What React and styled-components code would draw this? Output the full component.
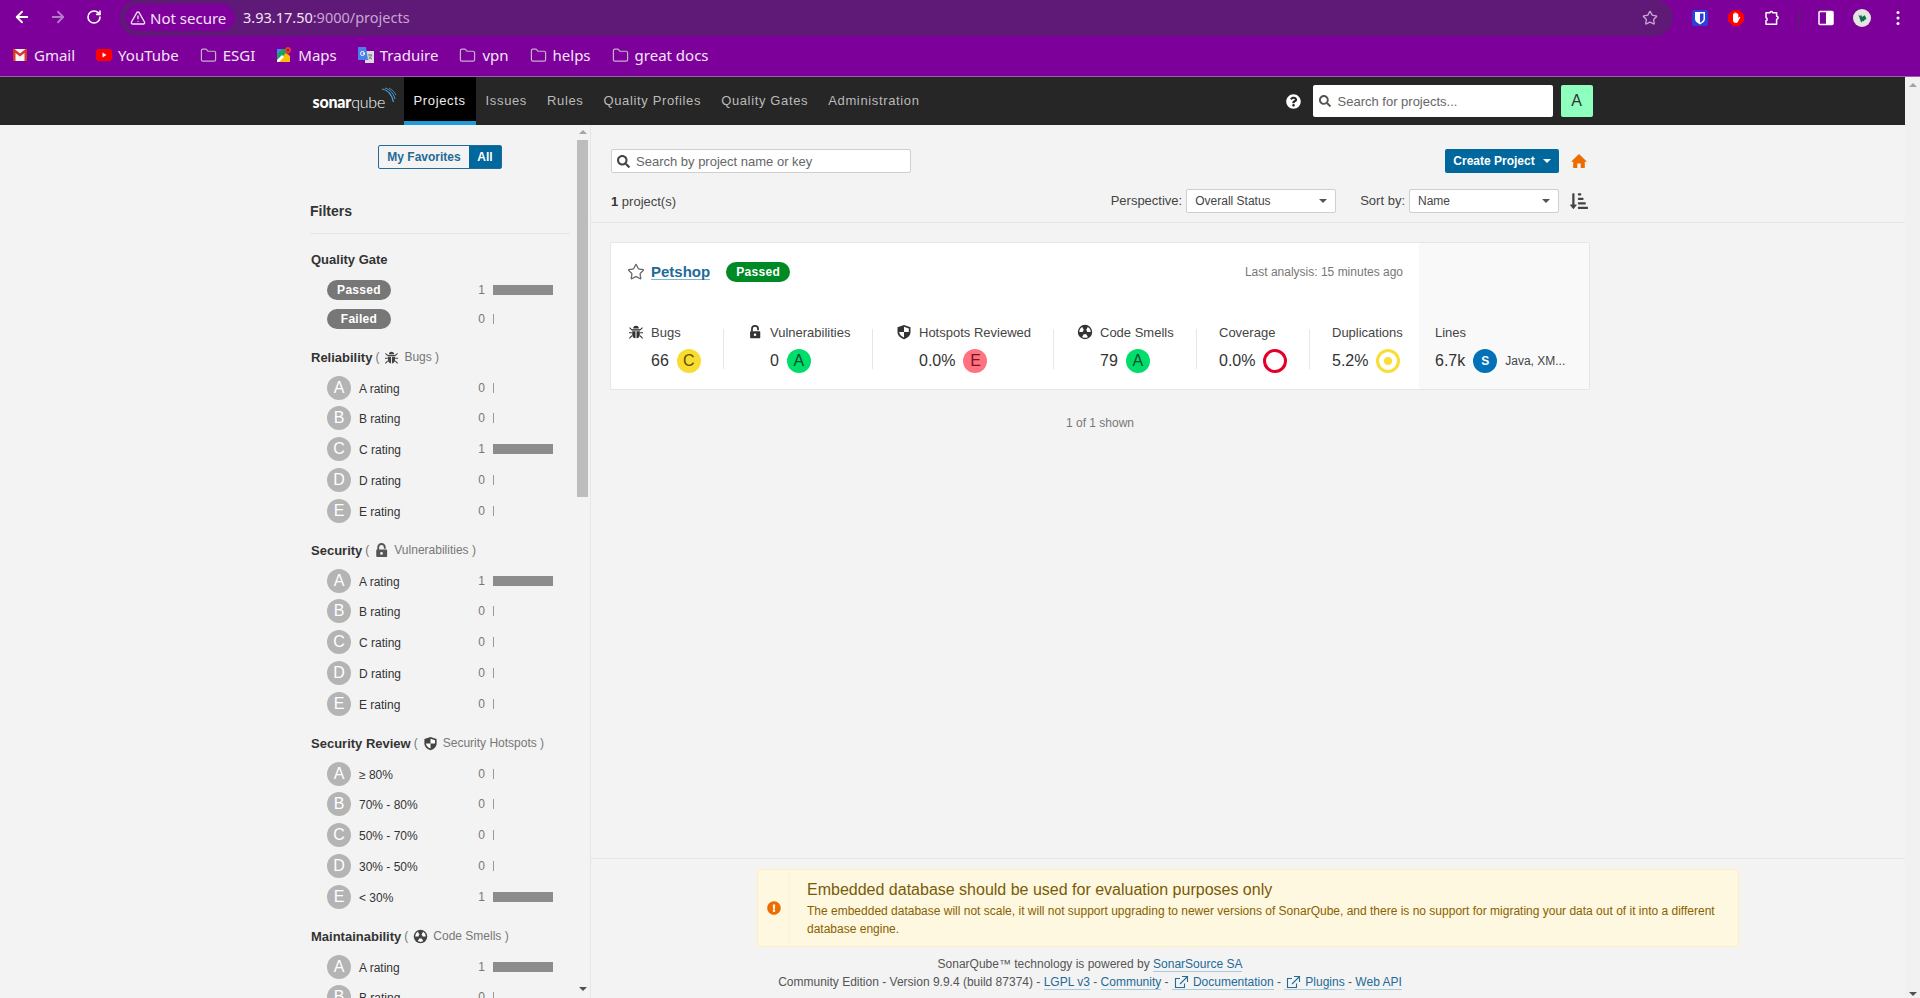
import React from 'react';
import styled, { createGlobalStyle } from 'styled-components';
import { ArrowLeft, ArrowRight, RotateCw, TriangleAlert, Star, Folder } from 'lucide-react';
import { FaQuestionCircle, FaExclamationCircle, FaSortAmountDownAlt, FaSearch } from 'react-icons/fa';

const Global = createGlobalStyle`
  html, body { margin: 0; padding: 0; height: 998px; overflow: hidden; background: #f3f3f3; }
  body { font-family: "Liberation Sans", Arial, sans-serif; font-size: 12px; color: #333; }
  * { box-sizing: border-box; }
`;

const Shell = styled.div`display: flex; flex-direction: column; width: 1920px; height: 998px;`;

/* Browser chrome */
const BrowserBar = styled.div`
  height: 77px; background: #7e009b; border-bottom: 1px solid #a05cb4; flex: none;
  font-family: "Noto Sans", sans-serif; color: #f3e6f7;
`;
const TabRow = styled.div`display: flex; align-items: flex-start; height: 36px;`;
const NavButtons = styled.div`display: flex; width: 120px; padding: 8px 0 0 13px; gap: 18px; color: #fff;`;
const IconSlot = styled.span`
  width: 18px; height: 18px; display: flex; align-items: center; justify-content: center;
  color: ${p => p.$dim ? '#b37cc6' : '#fff'};
`;
const AddressBar = styled.div`
  width: 1553px; height: 36px; border-radius: 18px; background: #5f1a78; display: flex; align-items: center;
  padding: 0 0 1px 5px; position: relative;
`;
const SecureChip = styled.div`
  width: 110px; height: 27px; border-radius: 14px; background: #7e009b; display: flex; align-items: center;
  gap: 4px; padding-left: 5px; font-size: 15px; color: #f3e6f7; white-space: nowrap;
`;
const Url = styled.div`margin-left: 8px; margin-bottom: 2px; font-size: 14.5px; color: #c8a6d2; white-space: nowrap; b { font-weight: 400; color: #f3e6f7; }`;
const AddressStar = styled.span`margin-left: auto; margin-right: 15px; display: flex; color: #c8a6d2;`;
const Extensions = styled.div`flex: 1; position: relative; display: flex; align-items: center; height: 36px;`;
const ExtSlot = styled.span`display: flex; align-items: center; justify-content: center; width: 18px; height: 20px; margin-left: ${p => p.$ml}px;`;
const ExtSep = styled.span`width: 2px; height: 20px; background: #5f1a78; margin-left: ${p => p.$ml}px;`;
const BookmarkRow = styled.div`display: flex; align-items: center; height: 40px; padding-left: 12px; padding-bottom: 2px;`;
const Bookmark = styled.div`display: flex; align-items: center; gap: 6px; margin-right: 21px; font-size: 15px; white-space: nowrap;`;
const FavBox = styled.span`display: flex; width: ${p => p.$w || 16}px; height: 16px; align-items: center; justify-content: center; color: #c4b0cd;`;

/* Layout */
const Body = styled.div`display: flex; flex: 1; min-height: 0;`;
const Content = styled.div`flex: 1; min-width: 0; display: flex; flex-direction: column;`;
const PageScroll = styled.div`width: 15px; background: #f1f1f1; display: flex; flex-direction: column; align-items: center; justify-content: space-between; padding: 6px 0 2px;`;
const ArrowUp = styled.span`width: 0; height: 0; border-left: 4px solid transparent; border-right: 4px solid transparent; border-bottom: 4px solid #a3a3a3;`;
const ArrowDown = styled.span`width: 0; height: 0; border-left: 4px solid transparent; border-right: 4px solid transparent; border-top: 4px solid #505050;`;

/* Sonar nav */
const TopNav = styled.div`height: 48px; background: #262626; flex: none;`;
const TopNavInner = styled.div`width: 1280px; height: 48px; margin: 0 auto; display: flex; align-items: stretch;`;
const LogoLink = styled.div`
  width: 91px; display: flex; align-items: center; position: relative; color: #fff; font-family: Lato, sans-serif;
  font-size: 16px; letter-spacing: -0.2px; padding-top: 1px;
  b { font-weight: 900; } span { font-weight: 300; }
`;
const LogoWaves = styled.svg`position: absolute; left: 68px; top: 10px;`;
const NavItem = styled.div`
  display: flex; align-items: center; padding: 4px 10px 2px; font-size: 13px; letter-spacing: 0.64px;
  color: ${p => p.$active ? '#eee' : '#bbb'};
  background: ${p => p.$active ? '#000' : 'transparent'};
  border-bottom: 4px solid ${p => p.$active ? '#1f9bd9' : 'transparent'};
`;
const NavRight = styled.div`margin-left: auto; display: flex; align-items: center; gap: 8px;`;
const HelpIcon = styled.span`display: flex; color: #fff; margin-right: 4px;`;
const GlobalSearch = styled.div`
  width: 240px; height: 32px; background: #fff; border-radius: 2px; display: flex; align-items: center;
  padding-left: 6px; gap: 7px; font-size: 13px; color: #666;
`;
const UserAvatar = styled.div`width: 32px; height: 32px; background: #8effbe; border-radius: 2px; display: flex; align-items: center; justify-content: center; font-size: 16px; color: #333;`;

const Columns = styled.div`display: flex; flex: 1; min-height: 0;`;

/* Sidebar */
const Sidebar = styled.aside`width: 591px; flex: none; display: flex; border-right: 1px solid #e6e6e6; overflow: hidden;`;
const SideInner = styled.div`width: 577px; flex: none; padding: 20px 7px 0 310px; overflow: hidden;`;
const SideScroll = styled.div`width: 11px; flex: none; display: flex; flex-direction: column; align-items: center; padding-top: 5px;`;
const SideThumb = styled.div`width: 11px; height: 357px; margin-top: 6px; margin-bottom: auto; background: #bdbdbd;`;
const SideArrows = styled.div`height: 9px; padding-top: 2px;`;
const Toggle = styled.div`display: flex; width: 124px; height: 24px; margin: 0 auto 32px; border: 1px solid #236a97; border-radius: 2px; font-weight: 700; font-size: 12px;`;
const ToggleOption = styled.div`
  flex: ${p => p.$on ? '0 0 32px' : '1'}; display: flex; align-items: center; justify-content: center;
  color: ${p => p.$on ? '#fff' : '#236a97'}; background: ${p => p.$on ? '#00689d' : 'transparent'};
`;
const FiltersTitle = styled.h2`margin: 0 0 15px; font-size: 14px; line-height: 20px; padding-bottom: 12px; border-bottom: 1px solid #e6e6e6; font-weight: 700; color: #333;`;
const Section = styled.section`margin-bottom: ${p => p.$mb ?? 11}px;`;
const SectionHead = styled.div`
  height: 20px; display: flex; align-items: center; padding: 0 0 ${p => p.$pb ?? 2}px 1px; margin-bottom: ${p => p.$mb ?? 8}px;
  font-weight: 700; font-size: 13px; color: #333; white-space: nowrap;
`;
const SectionSub = styled.span`display: inline-flex; align-items: center; gap: 5px; margin-left: 3px; font-size: 12px; font-weight: 400; color: #777;`;
const SubIcon = styled.span`display: inline-flex; color: #444;`;
const RowCount = styled.span`line-height: 24px; color: #777; font-size: 12px; width: 10px; text-align: right;`;
const BarBox = styled.span`width: 60px; height: 24px; margin-left: 8px; display: flex; align-items: center;`;
const PillRow = styled.div`
  display: flex; height: 29px; padding: 4px 17px 0; align-items: flex-start;
  ${RowCount} { line-height: 20px; }
  ${BarBox} { height: 20px; }
`;
const Pill = styled.span`
  width: 64px; height: 20px; border-radius: 10px; background: #777; color: #fff; font-weight: 700; font-size: 12px;
  letter-spacing: 0.3px; display: flex; align-items: center; justify-content: center;
`;
const RatingRow = styled.div`display: flex; height: 31px; padding: 0 17px; align-items: flex-start; ${SectionHead} + & { height: 30px; }`;
const FilterRating = styled.span`width: 24px; height: 24px; border-radius: 50%; background: #b4b4b4; color: #fff; font-size: 16px; display: flex; align-items: center; justify-content: center; flex: none;`;
const RowLabel = styled.span`margin-left: 8px; line-height: 26px; color: #333; font-size: 12px; white-space: nowrap;`;
const RowSpacer = styled.span`flex: 1;`;
const Bar = styled.span`display: block; height: 10px; width: ${p => p.$full ? 60 : 1}px; background: ${p => p.$full ? '#8c8c8c' : '#999'};`;

/* Main */
const Main = styled.main`flex: 1; min-width: 0; display: flex; flex-direction: column;`;
const PageHeader = styled.div`padding: 24px 0 9px 20px; border-bottom: 1px solid #e6e6e6;`;
const HeaderInner = styled.div`width: 978px; display: flex; flex-direction: column; gap: 16px;`;
const HeaderRow = styled.div`display: flex; align-items: center; height: 24px;`;
const ProjectSearch = styled.div`
  width: 300px; height: 24px; background: #fff; border: 1px solid #cfcfcf; border-radius: 2px; display: flex; align-items: center;
  padding-left: 5px; gap: 6px; color: #666; font-size: 13px; svg { color: #444; }
`;
const CreateButton = styled.div`
  margin-left: auto; width: 114px; height: 24px; background: #00689d; border-radius: 2px; color: #fff; font-weight: 700; font-size: 12px;
  display: flex; align-items: center; justify-content: center; gap: 8px;
`;
const Caret = styled.span`width: 0; height: 0; border-left: 4px solid transparent; border-right: 4px solid transparent; border-top: 4px solid ${p => p.$c || '#555'};`;
const HeaderIconBox = styled.span`width: 20px; margin-left: 10px; display: flex; justify-content: center; color: ${p => p.$c};`;
const ProjectCount = styled.div`color: #444; font-size: 13px; margin-right: auto; b { color: #333; }`;
const SelectLabel = styled.span`color: #444; font-size: 13px; margin-right: 4px; margin-left: ${p => p.$ml || 0}px; padding-bottom: 2px;`;
const FakeSelect = styled.div`
  width: 150px; height: 24px; background: #fff; border: 1px solid #cfcfcf; border-radius: 2px; padding: 0 8px; font-size: 12px; color: #444;
  display: flex; align-items: center; justify-content: space-between;
`;
const Card = styled.article`width: 980px; height: 148px; margin: 19px 0 0 19px; background: #fff; border: 1px solid #e6e6e6; border-radius: 2px; display: flex;`;
const CardLeft = styled.div`width: 808px; flex: none; display: flex; flex-direction: column;`;
const CardRight = styled.div`flex: 1; background: #f9f9f9; padding: 86px 0 0 16px;`;
const TitleRow = styled.div`display: flex; align-items: center; height: 20px; margin: 19px 16px 0 16px;`;
const StarBox = styled.span`display: flex; color: #666; margin-right: 6px;`;
const ProjectName = styled.a`font-weight: 700; font-size: 15px; color: #236a97; border-bottom: 1px solid #7ab5d4; line-height: 15px;`;
const PassedBadge = styled.span`width: 64px; height: 20px; margin-left: 16px; border-radius: 10px; background: #008a25; color: #fff; font-weight: 700; font-size: 12px; letter-spacing: 0.3px; display: flex; align-items: center; justify-content: center;`;
const LastAnalysis = styled.span`margin-left: auto; color: #777; font-size: 12px; white-space: nowrap;`;
const MetricRow = styled.div`display: flex; margin-top: 39px; height: 48px;`;
const Metric = styled.div`
  width: ${p => p.$w}px; padding-left: ${p => p.$pl}px; flex: none; height: 40px; margin-top: 8px;
  border-right: ${p => p.$last ? 'none' : '1px solid #e6e6e6'};
`;
const MetricHead = styled.div`display: flex; align-items: center; gap: ${p => p.$g ?? 7}px; height: 16px; margin-top: -5px; font-size: 13px; color: #444; white-space: nowrap;`;
const MetricValue = styled.div`display: flex; align-items: center; gap: 8px; height: 24px; margin-top: 9px; margin-left: ${p => p.$ml || 0}px; font-size: 16px; color: #333; white-space: nowrap;`;
const RatingDot = styled.span`width: 24px; height: 24px; border-radius: 50%; background: ${p => p.$bg}; color: ${p => p.$fg}; display: flex; align-items: center; justify-content: center; font-size: 16px; flex: none;`;
const CovRing = styled.span`width: 24px; height: 24px; border-radius: 50%; border: 3px solid ${p => p.$c}; display: flex; align-items: center; justify-content: center; flex: none;`;
const CovDot = styled.span`width: 8px; height: 8px; border-radius: 50%; background: #f9dd38;`;
const LinesDot = styled.span`width: 24px; height: 24px; border-radius: 50%; background: #0271b9; color: #fff; font-weight: 700; font-size: 12px; display: flex; align-items: center; justify-content: center; flex: none;`;
const Langs = styled.span`font-size: 12px; color: #444;`;
const Shown = styled.div`width: 978px; margin: 25px 0 0 20px; text-align: center; color: #777; font-size: 12px; line-height: 16px;`;

const Footer = styled.footer`margin-top: auto; border-top: 1px solid #e6e6e6; height: 140px; padding-top: 10px;`;
const Warning = styled.div`width: 982px; height: 78px; margin-left: 166px; background: #fdf8df; border: 1px solid #fbeec4; border-radius: 2px; display: flex; color: #8a6100;`;
const WarningIcon = styled.div`width: 32px; flex: none; display: flex; align-items: center; justify-content: center; border-right: 1px solid #fbf3d2; color: #ed6c02;`;
const WarningText = styled.div`padding: 10px 16px 0 17px; font-size: 12px; line-height: 18px;`;
const WarningTitle = styled.div`font-size: 16px; line-height: 20px; margin-bottom: 2px; color: #7a5a08;`;
const FootText = styled.div`width: 998px; margin-top: 8px; text-align: center; font-size: 12px; line-height: 18px; color: #555;`;
const FootLink = styled.a`color: #236a97; border-bottom: 1px solid #a5cbe0;`;
const ExtIcon = styled.svg`margin: 0 4px 0 2px; vertical-align: -3px;`;

/* Drawings */
const BugIcon = ({ s = 16, c = '#333' }) => (
  <svg width={s} height={s} viewBox="0 0 16 16" fill={c}>
    <path d="M5.2 4.6a2.8 2.8 0 0 1 5.6 0z" />
    <rect x="3.6" y="5.2" width="8.8" height="1.4" />
    <path d="M4.2 7.3h3.3v7C5.4 14.3 4.2 12.6 4.2 10.7zM8.5 7.3h3.3v3.4c0 1.9-1.2 3.6-3.3 3.6z" />
    <path d="M1.5 3.7l2.3 2.1M14.5 3.7l-2.3 2.1M1 8.8h3M15 8.8h-3M1.4 14.3l2.6-2.6M14.6 14.3l-2.6-2.6" stroke={c} strokeWidth="1.1" fill="none" />
  </svg>
);
const LockIcon = ({ s = 16, c = '#333' }) => (
  <svg width={s} height={s} viewBox="0 0 16 16" fill={c}>
    <path fillRule="evenodd" d="M3 7h10.2a.8.8 0 0 1 .8.8v6.4a.8.8 0 0 1-.8.8H3.2a.8.8 0 0 1-.8-.8V7.800A.8.8 0 0 1 3 7zM8 9.600a1.500 1.500 0 1 0 0 3 1.500 1.500 0 0 0 0-3z" />
    <path d="M4.500 7.500V4.500a3.500 3.500 0 0 1 7 0V6" fill="none" stroke={c} strokeWidth="2" />
  </svg>
);
const ShieldIcon = ({ s = 16, c = '#333' }) => (
  <svg width={s} height={s} viewBox="0 0 16 16">
    <path fill={c} d="M8 1l6.500 2.200V8c0 3.500-2.800 6-6.500 7.200C4.300 14 1.500 11.500 1.500 8V3.200z" />
    <path fill="#fff" d="M8 2.800l4.800 1.600V8H8zM8 8v5.400C5.500 12.400 3.300 10.600 3.200 8z" />
  </svg>
);
const SmellIcon = ({ s = 16, c = '#333' }) => (
  <svg width={s} height={s} viewBox="0 0 16 16">
    <circle cx="8" cy="8" r="7.200" fill={c} />
    {[0, 120, 240].map(r => (
      <path key={r} fill="#fff" transform={`rotate(${r} 8 8)`} d="M9.100 9.900L10.900 12.900A5.700 5.700 0 0 1 5.100 12.900L6.900 9.900A2.200 2.200 0 0 0 9.100 9.900z" />
    ))}
  </svg>
);
const HomeIcon = () => (
  <svg width="16" height="16" viewBox="0 0 16 16" fill="#ed6c02">
    <path d="M8 1L16 8.700h-2.200V15H9.700v-4.500H6.300V15H2.200V8.700H0z" />
  </svg>
);
const GmailFav = () => (
  <svg width="16" height="14" viewBox="0 0 16 14">
    <rect x="1" y="1" width="14" height="12" fill="#f5f5f5" />
    <path d="M1 1v12h2.500V5l4.500 3.500L12.500 5v8H15V1h-1.500L8 5.500 2.500 1z" fill="#d9362b" />
  </svg>
);
const YoutubeFav = () => (
  <svg width="16" height="12" viewBox="0 0 16 12">
    <rect width="16" height="12" rx="3" fill="#f00" />
    <path d="M6.500 3.500v5L10.500 6z" fill="#fff" />
  </svg>
);
const MapsFav = () => (
  <svg width="14" height="16" viewBox="0 0 14 16">
    <path d="M0 2h9v13H0z" fill="#1aa260" />
    <path d="M0 2h5L0 8z" fill="#4285f4" />
    <path d="M0 15l9-9 4 3v6z" fill="#fbbc04" />
    <path d="M0 13l5-5 2 2-5 5H0z" fill="#fff" />
    <path d="M11 0a3 3 0 0 1 3 3c0 2-3 4.500-3 4.500S8 5 8 3a3 3 0 0 1 3-3z" fill="#e53935" />
    <circle cx="11" cy="3" r="1" fill="#8b1a1a" />
  </svg>
);
const TranslateFav = () => (
  <svg width="16" height="16" viewBox="0 0 16 16">
    <rect x="7" y="4" width="9" height="12" fill="#dcdcdc" />
    <path d="M10 8h4M12 7v1M10.500 12c2-1 3-2.500 3-4M11 9.500c.5 1.200 1.500 2 3 2.500" stroke="#666" strokeWidth=".8" fill="none" />
    <path d="M0 0h8l2 13H0z" fill="#4a80ec" />
    <circle cx="4.500" cy="6.500" r="2" fill="none" stroke="#fff" strokeWidth="1" />
    <path d="M5 6.500h2" stroke="#fff" />
  </svg>
);
const BitwardenExt = () => (
  <svg width="16" height="16" viewBox="0 0 16 16">
    <rect width="16" height="16" rx="2" fill="#2c3fd6" />
    <path d="M3 2h10v7c0 2.500-2.500 4-5 5.500C5.500 13 3 11.500 3 9z" fill="#fff" />
    <path d="M8 3.500h3.500V9c0 1.600-1.700 2.700-3.500 3.800z" fill="#2c3fd6" />
  </svg>
);
const UblockExt = () => (
  <svg width="16" height="16" viewBox="0 0 16 16">
    <path d="M5 0h6l5 5v6l-5 5H5l-5-5V5z" fill="#f00" />
    <path d="M5 7V4a.7.700 0 0 1 1.300 0V3a.7.700 0 0 1 1.400 0v.300a.7.700 0 0 1 1.300 0V4a.7.700 0 0 1 1.300 0v4l1-1c.6-.4 1.200.2.800.8L9.800 12c-.4.600-1 1-1.800 1-2 0-3-1-3-3z" fill="#fff" />
  </svg>
);
const PuzzleExt = () => (
  <svg width="17" height="16" viewBox="0 0 17 16" fill="none" stroke="#fff" strokeWidth="1.500">
    <path d="M2 2.800h4a1.300 1.300 0 1 1 2.600 0h4v3.400a1.300 1.300 0 1 1 0 3v5H2v-3.400c1.500 0 1.500-3 0-3z" strokeLinejoin="round" />
  </svg>
);
const PanelExt = () => (
  <svg width="16" height="16" viewBox="0 0 16 16">
    <rect x="1" y="1.500" width="14" height="13" rx="1" fill="none" stroke="#fff" strokeWidth="1.500" />
    <rect x="8" y="1.500" width="7" height="13" fill="#fff" />
  </svg>
);
const ProfileExt = () => (
  <svg width="20" height="20" viewBox="0 0 20 20">
    <circle cx="10" cy="10" r="10" fill="#e4e4e0" />
    <path d="M6 6l2 2 1-2 1 3 3-2 1 2 1 2-2 1-1 2-1-1-2 2-1-3z" fill="#0d6b4e" />
  </svg>
);
const DotsExt = () => (
  <svg width="4" height="16" viewBox="0 0 4 16" fill="#fff">
    <circle cx="2" cy="2.500" r="1.500" /><circle cx="2" cy="8" r="1.500" /><circle cx="2" cy="13.500" r="1.500" />
  </svg>
);
const FolderFav = () => <Folder size={17} strokeWidth={1.7} />;

const Ext = () => (
  <ExtIcon width="15" height="14" viewBox="0 0 15 14" fill="none" stroke="#236a97" strokeWidth="1.100">
    <path d="M10.500 8.500v4h-9v-9H6M8 1.500h5.500V7M13.500 1.500L6 9" />
  </ExtIcon>
);

const RATINGS = ['A', 'B', 'C', 'D', 'E'];
const ratingRows = (labels, counts) => RATINGS.map((r, i) => ({ r, label: labels[i], n: counts[i] }));
const ratingLabels = RATINGS.map(r => `${r} rating`);

const sections = [
  { title: 'Reliability', icon: <BugIcon s={15} c="#444" />, sub: 'Bugs', rows: ratingRows(ratingLabels, [0, 0, 1, 0, 0]) },
  { title: 'Security', icon: <LockIcon s={15} c="#555" />, sub: 'Vulnerabilities', rows: ratingRows(ratingLabels, [1, 0, 0, 0, 0]) },
  { title: 'Security Review', icon: <ShieldIcon s={15} c="#444" />, sub: 'Security Hotspots', rows: ratingRows(['≥ 80%', '70% - 80%', '50% - 70%', '30% - 50%', '< 30%'], [0, 0, 0, 0, 1]) },
  { title: 'Maintainability', icon: <SmellIcon s={15} c="#444" />, sub: 'Code Smells', rows: ratingRows(ratingLabels, [1, 0, 0, 0, 0]) },
];

const bookmarks = [
  [<GmailFav />, 'Gmail', 16], [<YoutubeFav />, 'YouTube', 16], [<FolderFav />, 'ESGI', 17], [<MapsFav />, 'Maps', 16],
  [<TranslateFav />, 'Traduire', 16], [<FolderFav />, 'vpn', 17], [<FolderFav />, 'helps', 17], [<FolderFav />, 'great docs', 17],
];

const navItems = ['Projects', 'Issues', 'Rules', 'Quality Profiles', 'Quality Gates', 'Administration'];

const GREEN = ['#00dd6b', '#07502a'];
const YELLOW = ['#f9dc32', '#5c4d00'];
const RED = ['#ff7380', '#7a1420'];

export default function App() {
  return (
    <Shell>
      <Global />
      <BrowserBar>
        <TabRow>
          <NavButtons>
            <IconSlot><ArrowLeft size={18} strokeWidth={2.4} /></IconSlot>
            <IconSlot $dim><ArrowRight size={18} strokeWidth={2.4} /></IconSlot>
            <IconSlot><RotateCw size={16} strokeWidth={2.4} /></IconSlot>
          </NavButtons>
          <AddressBar>
            <SecureChip><TriangleAlert size={16} strokeWidth={2} />Not secure</SecureChip>
            <Url><b>3.93.17.50</b>:9000/projects</Url>
            <AddressStar><Star size={16} strokeWidth={2} /></AddressStar>
          </AddressBar>
          <Extensions>
            <ExtSlot $ml={18}><BitwardenExt /></ExtSlot>
            <ExtSlot $ml={18}><UblockExt /></ExtSlot>
            <ExtSlot $ml={18}><PuzzleExt /></ExtSlot>
            <ExtSep $ml={17} />
            <ExtSlot $ml={17}><PanelExt /></ExtSlot>
            <ExtSlot $ml={18}><ProfileExt /></ExtSlot>
            <ExtSlot $ml={18}><DotsExt /></ExtSlot>
          </Extensions>
        </TabRow>
        <BookmarkRow>
          {bookmarks.map(([ic, t, w]) => <Bookmark key={t}><FavBox $w={w}>{ic}</FavBox>{t}</Bookmark>)}
        </BookmarkRow>
      </BrowserBar>
      <Body>
        <Content>
          <TopNav>
            <TopNavInner>
              <LogoLink>
                <b>sonar</b><span>qube</span>
                <LogoWaves width="16" height="20" viewBox="0 0 16 20" fill="none" stroke="#4b9fd5">
                  <path d="M1 2c6 1 10 6 11.500 13" strokeWidth="1.200" />
                  <path d="M4 1c5 1.500 8.500 5 10 11" strokeWidth="1" />
                  <path d="M8 1c3 1.500 5.500 4 7 7" strokeWidth=".8" />
                </LogoWaves>
              </LogoLink>
              {navItems.map((n, i) => <NavItem key={n} $active={i === 0}>{n}</NavItem>)}
              <NavRight>
                <HelpIcon><FaQuestionCircle size={15} /></HelpIcon>
                <GlobalSearch><FaSearch size={12} color="#555" />Search for projects...</GlobalSearch>
                <UserAvatar>A</UserAvatar>
              </NavRight>
            </TopNavInner>
          </TopNav>
          <Columns>
            <Sidebar>
              <SideInner>
                <Toggle>
                  <ToggleOption>My Favorites</ToggleOption>
                  <ToggleOption $on>All</ToggleOption>
                </Toggle>
                <FiltersTitle>Filters</FiltersTitle>
                <Section $mb={14}>
                  <SectionHead $mb={7} $pb={0}>Quality Gate</SectionHead>
                  {[['Passed', 1], ['Failed', 0]].map(([t, n]) => (
                    <PillRow key={t}>
                      <Pill>{t}</Pill><RowSpacer />
                      <RowCount>{n}</RowCount>
                      <BarBox><Bar $full={n > 0} /></BarBox>
                    </PillRow>
                  ))}
                </Section>
                {sections.map(s => (
                  <Section key={s.title}>
                    <SectionHead>
                      {s.title}
                      <SectionSub>( <SubIcon>{s.icon}</SubIcon> {s.sub} )</SectionSub>
                    </SectionHead>
                    {s.rows.map(row => (
                      <RatingRow key={row.r}>
                        <FilterRating>{row.r}</FilterRating>
                        <RowLabel>{row.label}</RowLabel>
                        <RowSpacer />
                        <RowCount>{row.n}</RowCount>
                        <BarBox><Bar $full={row.n > 0} /></BarBox>
                      </RatingRow>
                    ))}
                  </Section>
                ))}
              </SideInner>
              <SideScroll>
                <ArrowUp />
                <SideThumb />
                <SideArrows><ArrowDown /></SideArrows>
              </SideScroll>
            </Sidebar>
            <Main>
              <PageHeader>
                <HeaderInner>
                  <HeaderRow>
                    <ProjectSearch><FaSearch size={13} />Search by project name or key</ProjectSearch>
                    <CreateButton>Create Project<Caret $c="#fff" /></CreateButton>
                    <HeaderIconBox $c="#ed6c02"><HomeIcon /></HeaderIconBox>
                  </HeaderRow>
                  <HeaderRow>
                    <ProjectCount><b>1</b> project(s)</ProjectCount>
                    <SelectLabel>Perspective:</SelectLabel>
                    <FakeSelect>Overall Status<Caret /></FakeSelect>
                    <SelectLabel $ml={24}>Sort by:</SelectLabel>
                    <FakeSelect>Name<Caret /></FakeSelect>
                    <HeaderIconBox $c="#444"><FaSortAmountDownAlt size={18} /></HeaderIconBox>
                  </HeaderRow>
                </HeaderInner>
              </PageHeader>
              <Card>
                <CardLeft>
                  <TitleRow>
                    <StarBox><Star size={18} strokeWidth={1.700} /></StarBox>
                    <ProjectName>Petshop</ProjectName>
                    <PassedBadge>Passed</PassedBadge>
                    <LastAnalysis>Last analysis: 15 minutes ago</LastAnalysis>
                  </TitleRow>
                  <MetricRow>
                    <Metric $w={113} $pl={17}>
                      <MetricHead><BugIcon s={16} />Bugs</MetricHead>
                      <MetricValue $ml={23}>66<RatingDot $bg={YELLOW[0]} $fg={YELLOW[1]}>C</RatingDot></MetricValue>
                    </Metric>
                    <Metric $w={149} $pl={24}>
                      <MetricHead $g={8}><LockIcon s={14} />Vulnerabilities</MetricHead>
                      <MetricValue $ml={22}>0<RatingDot $bg={GREEN[0]} $fg={GREEN[1]}>A</RatingDot></MetricValue>
                    </Metric>
                    <Metric $w={181} $pl={23}>
                      <MetricHead><ShieldIcon s={16} />Hotspots Reviewed</MetricHead>
                      <MetricValue $ml={23}>0.0%<RatingDot $bg={RED[0]} $fg={RED[1]}>E</RatingDot></MetricValue>
                    </Metric>
                    <Metric $w={143} $pl={23}>
                      <MetricHead><SmellIcon s={16} />Code Smells</MetricHead>
                      <MetricValue $ml={23}>79<RatingDot $bg={GREEN[0]} $fg={GREEN[1]}>A</RatingDot></MetricValue>
                    </Metric>
                    <Metric $w={113} $pl={22}>
                      <MetricHead>Coverage</MetricHead>
                      <MetricValue>0.0%<CovRing $c="#e4002b" /></MetricValue>
                    </Metric>
                    <Metric $w={109} $pl={22} $last>
                      <MetricHead>Duplications</MetricHead>
                      <MetricValue>5.2%<CovRing $c="#f9dd38"><CovDot /></CovRing></MetricValue>
                    </Metric>
                  </MetricRow>
                </CardLeft>
                <CardRight>
                  <MetricHead>Lines</MetricHead>
                  <MetricValue>6.7k<LinesDot>S</LinesDot><Langs>Java, XM...</Langs></MetricValue>
                </CardRight>
              </Card>
              <Shown>1 of 1 shown</Shown>
              <Footer>
                <Warning>
                  <WarningIcon><FaExclamationCircle size={14} /></WarningIcon>
                  <WarningText>
                    <WarningTitle>Embedded database should be used for evaluation purposes only</WarningTitle>
                    The embedded database will not scale, it will not support upgrading to newer versions of SonarQube, and there is no support for migrating your data out of it into a different database engine.
                  </WarningText>
                </Warning>
                <FootText>
                  <div>SonarQube™ technology is powered by <FootLink>SonarSource SA</FootLink></div>
                  <div>
                    Community Edition - Version 9.9.4 (build 87374) - <FootLink>LGPL v3</FootLink> - <FootLink>Community</FootLink> - <FootLink><Ext />Documentation</FootLink> - <FootLink><Ext />Plugins</FootLink> - <FootLink>Web API</FootLink>
                  </div>
                </FootText>
              </Footer>
            </Main>
          </Columns>
        </Content>
        <PageScroll><ArrowUp /><ArrowDown /></PageScroll>
      </Body>
    </Shell>
  );
}
